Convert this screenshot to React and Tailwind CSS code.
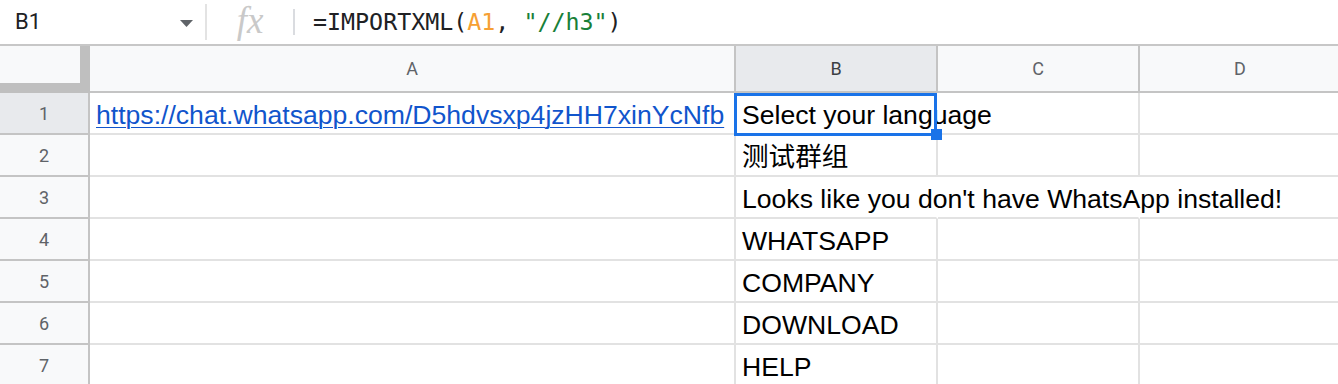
import React from "react";

const rowsData = [
  { a: "https://chat.whatsapp.com/D5hdvsxp4jzHH7xinYcNfb", b: "Select your language" },
  { b: "测试群组" },
  { b: "Looks like you don't have WhatsApp installed!", wide: true },
  { b: "WHATSAPP" },
  { b: "COMPANY" },
  { b: "DOWNLOAD" },
  { b: "HELP" },
];

export default function App() {
  return (
    <div className="w-[1338px] h-[384px] overflow-hidden bg-white font-['Liberation_Sans','Noto_Sans_CJK_SC',sans-serif] text-black">
      {/* Formula bar */}
      <div className="flex h-[46px] items-center border-b-2 border-[#c7c7c7]">
        <div className="flex w-[205px] items-center pl-[15px] pr-[12px]">
          <span className="flex-1 font-['Roboto',sans-serif] text-[22px] leading-none text-[#202124]">B1</span>
          <svg width="13" height="7" viewBox="0 0 13 7" className="mt-[2px]">
            <path d="M0 0 L13 0 L6.5 7 Z" fill="#5f6368" />
          </svg>
        </div>
        <div className="h-[36px] w-[2px] bg-[#e3e3e3]" />
        <div className="flex w-[86px] items-center justify-center">
          <span className="font-['Liberation_Serif',serif] text-[37px] italic leading-none text-[#c9c9c9] -mt-[4px]">fx</span>
        </div>
        <div className="h-[26px] w-[2px] bg-[#dadce0]" />
        <div className="pl-[18px] font-['DejaVu_Sans_Mono',monospace] text-[23.3px] leading-none text-[#202124]">
          =IMPORTXML(<span className="text-[#f6a033]">A1</span>, <span className="text-[#188038]">"//h3"</span>)
        </div>
      </div>

      {/* Column headers */}
      <div className="flex h-[47px]">
        <div className="w-[90px] h-full shrink-0 bg-[#bfbfbf]">
          <div className="h-[37px] w-[80px] bg-[#f8f9fa]" />
        </div>
        <div className="flex w-[646px] shrink-0 items-center justify-center border-r-2 border-b-2 border-[#c4c4c4] bg-[#f8f9fa] font-['Roboto',sans-serif] text-[18px] text-[#5f6368]">A</div>
        <div className="flex w-[202px] shrink-0 items-center justify-center border-r-2 border-b-2 border-[#c4c4c4] bg-[#e8eaed] font-['Roboto',sans-serif] text-[18px] text-[#3c4043]">B</div>
        <div className="flex w-[202px] shrink-0 items-center justify-center border-r-2 border-b-2 border-[#c4c4c4] bg-[#f8f9fa] font-['Roboto',sans-serif] text-[18px] text-[#5f6368]">C</div>
        <div className="flex w-[202px] shrink-0 items-center justify-center border-r-2 border-b-2 border-[#c4c4c4] bg-[#f8f9fa] font-['Roboto',sans-serif] text-[18px] text-[#5f6368]">D</div>
      </div>

      {/* Rows */}
      {rowsData.map((r, i) => (
        <div key={i} className="flex h-[42px]">
          <div
            className={`flex w-[90px] shrink-0 items-center justify-center border-r-2 border-b-2 border-[#c4c4c4] font-['Roboto',sans-serif] text-[18px] text-[#5f6368] ${
              i === 0 ? "bg-[#e8eaed]" : "bg-[#f8f9fa]"
            }`}
          >
            {i + 1}
          </div>
          <div className="flex w-[646px] shrink-0 items-end border-r-2 border-b-2 border-[#e2e2e2] pb-[3px] pl-[6px]">
            {r.a && (
              <span className="whitespace-nowrap text-[26.6px] leading-[30px] text-[#1155cc] underline decoration-1 underline-offset-[3px]">
                {r.a}
              </span>
            )}
          </div>
          <div
            className={`relative flex w-[202px] shrink-0 items-end border-b-2 pb-[3px] pl-[6px] ${
              i === 0 || r.wide ? "border-r-2 border-r-transparent" : "border-r-2 border-r-[#e2e2e2]"
            } border-b-[#e2e2e2]`}
          >
            <span className="relative z-10 whitespace-nowrap text-[26.6px] leading-[30px]">{r.b}</span>
            {i === 0 && (
              <div className="pointer-events-none absolute left-[-2px] top-0 z-20 h-[43px] w-[203px] border-[3px] border-[#1a73e8]">
                <div className="absolute left-[194px] top-[33px] h-[11px] w-[11px] bg-[#1a73e8]" />
              </div>
            )}
          </div>
          <div
            className={`w-[202px] shrink-0 border-b-2 border-b-[#e2e2e2] border-r-2 ${
              r.wide ? "border-r-transparent" : "border-r-[#e2e2e2]"
            }`}
          />
          <div className="w-[202px] shrink-0 border-b-2 border-r-2 border-[#e2e2e2]" />
        </div>
      ))}
    </div>
  );
}
